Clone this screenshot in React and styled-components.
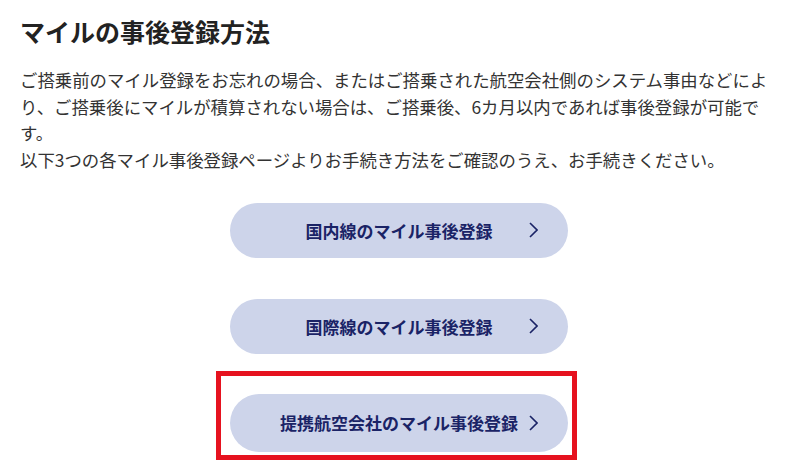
import React from 'react';
import styled, { createGlobalStyle } from 'styled-components';

const GlobalStyle = createGlobalStyle`
  html, body {
    margin: 0;
    padding: 0;
    background: #ffffff;
  }
  body {
    font-family: "Noto Sans CJK JP", "Noto Sans", sans-serif;
  }
`;

const Page = styled.div`
  width: 800px;
  height: 469px;
  box-sizing: border-box;
  padding: 14px 20px 0 20px;
  overflow: hidden;
`;

const Title = styled.h2`
  margin: 0;
  font-size: 25px;
  line-height: 35px;
  font-weight: 700;
  color: #222222;
`;

const Lead = styled.p`
  margin: 18px 0 0 0;
  width: 752px;
  font-size: 17.4px;
  line-height: 26.7px;
  color: #333333;
`;

const LinkList = styled.div`
  display: flex;
  flex-direction: column;
  align-items: flex-start;
  gap: 17px;
  padding-left: 196px;
  margin-top: 29px;
`;

const LinkGroup = styled.div`
  display: flex;
  flex-direction: column;
  gap: 41px;
  padding-left: 14px;
`;

const Highlight = styled.div`
  border: 5px solid #e6121f;
  padding: 18px 4px 3px 9px;
`;

const LinkButton = styled.a`
  display: grid;
  grid-template-columns: 1fr auto 1fr;
  align-items: center;
  width: 338px;
  height: ${(p) => (p.$tall ? 58 : 55)}px;
  border-radius: 30px;
  background: #cdd4ea;
  color: #1a2366;
  font-size: 17px;
  font-weight: 700;
  text-decoration: none;
  cursor: pointer;
`;

const Label = styled.span`
  grid-column: 2;
  white-space: nowrap;
`;

const ArrowCell = styled.span`
  grid-column: 3;
  display: flex;
  justify-content: flex-end;
  padding-right: 30px;
`;

const Chevron = () => (
  <ArrowCell>
    <svg width="9" height="16" viewBox="0 0 9 16" fill="none">
      <polyline points="1,1 8,8 1,15" stroke="#1a2366" strokeWidth="1.6" />
    </svg>
  </ArrowCell>
);

const App = () => {
  return (
    <>
      <GlobalStyle />
      <Page>
        <Title>マイルの事後登録方法</Title>
        <Lead>
          ご搭乗前のマイル登録をお忘れの場合、またはご搭乗された航空会社側のシステム事由などにより、ご搭乗後にマイルが積算されない場合は、ご搭乗後、6カ月以内であれば事後登録が可能です。
          <br />
          以下3つの各マイル事後登録ページよりお手続き方法をご確認のうえ、お手続きください。
        </Lead>
        <LinkList>
          <LinkGroup>
            <LinkButton>
              <Label>国内線のマイル事後登録</Label>
              <Chevron />
            </LinkButton>
            <LinkButton>
              <Label>国際線のマイル事後登録</Label>
              <Chevron />
            </LinkButton>
          </LinkGroup>
          <Highlight>
            <LinkButton $tall>
              <Label>提携航空会社のマイル事後登録</Label>
              <Chevron />
            </LinkButton>
          </Highlight>
        </LinkList>
      </Page>
    </>
  );
};

export default App;
